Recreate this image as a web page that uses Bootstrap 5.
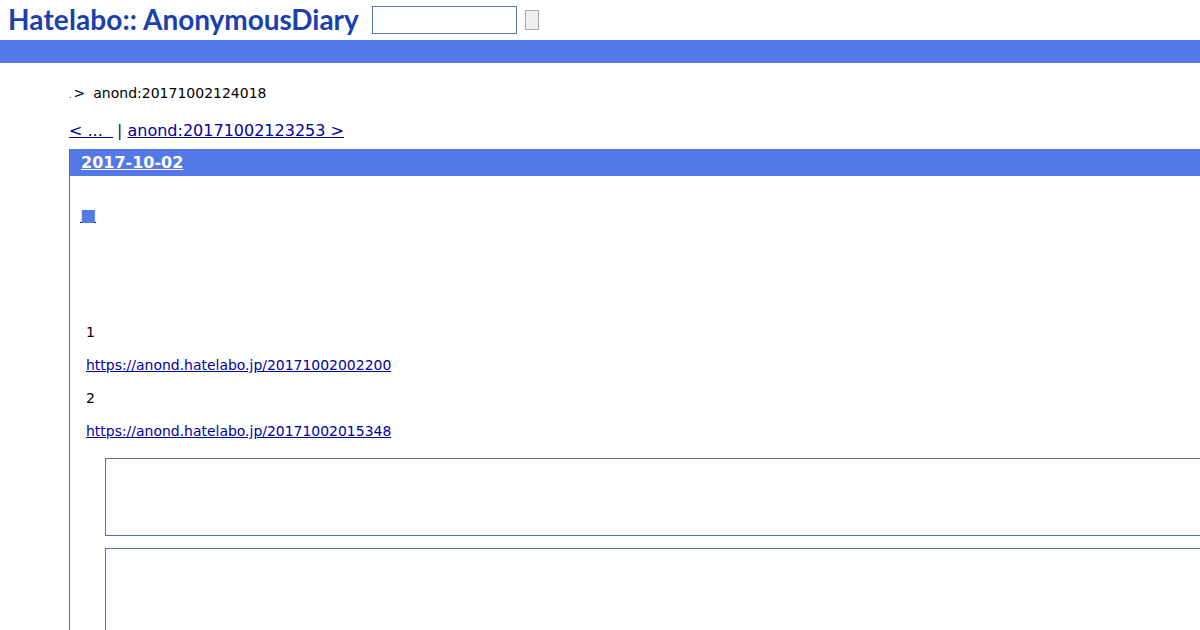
<!DOCTYPE html>
<html lang="ja">
<head>
  <meta charset="UTF-8">
  <meta name="viewport" content="width=device-width, initial-scale=1.0">
  <title>anond:20171002124018</title>
  <link href="https://cdn.jsdelivr.net/npm/bootstrap@5.3.0/dist/css/bootstrap.min.css" rel="stylesheet">
  <style>
    html, body {
      overflow: hidden;
      height: 630px;
    }
    body {
      font-family: "DejaVu Sans", sans-serif;
      font-size: 14px;
      line-height: 1.2;
      color: #000;
      background: #fff;
    }
    a {
      color: #0000a0;
    }
    .site-head {
      height: 40px;
      padding-left: 8px;
    }
    .site-logo {
      font-family: Lato, sans-serif;
      font-weight: 700;
      font-size: 28px;
      line-height: 38px;
      height: 40px;
      color: #1c3fb0;
      width: 364px;
      white-space: nowrap;
      letter-spacing: .1px;
    }
    .logo-gap {
      margin-left: 6px;
      letter-spacing: -.05px;
    }
    .site-search {
      width: 145px;
      height: 28px;
      border: 1px solid #5a78ae;
      background: #fff;
      padding: 0;
    }
    .site-go {
      width: 14px;
      height: 20px;
      margin-left: 8px;
      border: 1px solid #a9a9a9;
      background: #efefef;
      padding: 0;
    }
    .blue-bar {
      height: 23px;
      background: #5279e7;
    }
    .page-body {
      padding-left: 69px;
    }
    .crumbs {
      height: 17px;
      margin-top: 22px;
      line-height: 17px;
    }
    .crumb-dot {
      font-size: 8px;
      margin-right: 2px;
    }
    .crumb-sep {
      margin-right: 8px;
    }
    .pager {
      margin-top: 19px;
      height: 19px;
      font-size: 16px;
      line-height: 19px;
      color: #222;
    }
    .pager-prev {
      margin-right: -1px;
    }
    .day-frame {
      margin-top: 9px;
      width: 1300px;
      border-left: 1px solid #5a6f9e;
      height: 600px;
    }
    .day-title {
      height: 27px;
      margin-left: -1px;
      padding-left: 11px;
      background: #5279e7;
      font-size: 16px;
      font-weight: 700;
      line-height: 27px;
    }
    .day-title a {
      color: #fff;
    }
    .sect-mark {
      display: block;
      margin: 30px 0 0 10px;
      height: 18px;
      line-height: 18px;
      font-size: 17px;
    }
    .sect-mark a {
      color: #5279e7;
      text-decoration-color: #0000a0;
    }
    .entry-lines {
      margin: 100px 0 0 16px;
    }
    .entry-lines p {
      height: 17px;
      line-height: 17px;
      margin: 0 0 16px;
    }
    .entry-lines a {
      font-size: 13.96px;
    }
    .quote-box {
      margin: 18px 0 0 35px;
      border: 1px solid #5a6f9e;
      height: 78px;
    }
    .quote-box + .quote-box {
      margin-top: 12px;
      height: 200px;
    }
  </style>
</head>
<body>
  <header class="site-head d-flex align-items-center">
    <div class="site-logo">Hatelabo::<span class="logo-gap">AnonymousDiary</span></div>
    <input type="text" class="site-search" aria-label="search">
    <button type="button" class="site-go" aria-label="go"></button>
  </header>
  <div class="blue-bar"></div>

  <main class="page-body">
    <div class="crumbs"><a class="crumb-dot text-decoration-none text-body" href="#">.</a><span class="crumb-sep">&gt;</span>anond:20171002124018</div>
    <div class="pager"><a class="pager-prev" href="#">&lt; ... &nbsp;</a> | <a href="#">anond:20171002123253 &gt;</a></div>

    <section class="day-frame">
      <h1 class="day-title m-0"><a href="#">2017-10-02</a></h1>
      <div class="sect-mark"><a href="#">■</a></div>
      <div class="entry-lines">
        <p>1</p>
        <p><a href="#">https://anond.hatelabo.jp/20171002002200</a></p>
        <p>2</p>
        <p><a href="#">https://anond.hatelabo.jp/20171002015348</a></p>
      </div>
      <div class="quote-box"></div>
      <div class="quote-box"></div>
    </section>
  </main>

  <script src="https://cdn.jsdelivr.net/npm/bootstrap@5.3.0/dist/js/bootstrap.bundle.min.js"></script>
</body>
</html>
